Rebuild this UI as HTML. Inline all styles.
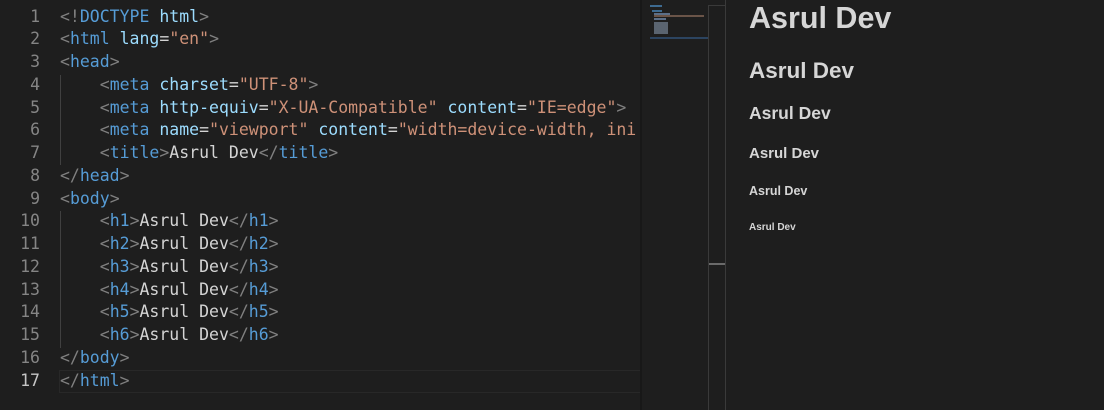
<!DOCTYPE html>
<html style="overflow:hidden;height:410px"><head><style>
body{margin:0;width:1104px;height:410px;background:#1e1e1e;overflow:hidden;position:relative;font-family:"DejaVu Sans Mono",monospace}
.ed{position:absolute;left:0;top:5.5px;width:640px;font-size:16.5px;line-height:22.75px;color:#d4d4d4}
.ed>div{position:relative;height:22.75px}
.ln{position:absolute;left:0;width:40px;text-align:right;color:#858585}
.cd{position:absolute;left:60px;white-space:pre}
.t{color:#569cd6}.p{color:#808080}.a{color:#9cdcfe}.s{color:#ce9178}
.guide{position:absolute;left:60px;width:1px;background:#404040}
.cur{position:absolute;left:59px;width:581px;top:370px;height:21px;border:1px solid #282828}
</style></head><body>
<div class="guide" style="top:75px;height:90px"></div>
<div class="guide" style="top:211px;height:137px"></div>
<div class="cur"></div>
<div class="ed"><div><span class="ln">1</span><span class="cd"><span class="p">&lt;!</span><span class="t">DOCTYPE</span> <span class="a">html</span><span class="p">&gt;</span></span></div><div><span class="ln">2</span><span class="cd"><span class="p">&lt;</span><span class="t">html</span> <span class="a">lang</span>=<span class="s">"en"</span><span class="p">&gt;</span></span></div><div><span class="ln">3</span><span class="cd"><span class="p">&lt;</span><span class="t">head</span><span class="p">&gt;</span></span></div><div><span class="ln">4</span><span class="cd">    <span class="p">&lt;</span><span class="t">meta</span> <span class="a">charset</span>=<span class="s">"UTF-8"</span><span class="p">&gt;</span></span></div><div><span class="ln">5</span><span class="cd">    <span class="p">&lt;</span><span class="t">meta</span> <span class="a">http-equiv</span>=<span class="s">"X-UA-Compatible"</span> <span class="a">content</span>=<span class="s">"IE=edge"</span><span class="p">&gt;</span></span></div><div><span class="ln">6</span><span class="cd">    <span class="p">&lt;</span><span class="t">meta</span> <span class="a">name</span>=<span class="s">"viewport"</span> <span class="a">content</span>=<span class="s">"width=device-width, ini</span></span></div><div><span class="ln">7</span><span class="cd">    <span class="p">&lt;</span><span class="t">title</span><span class="p">&gt;</span>Asrul Dev<span class="p">&lt;/</span><span class="t">title</span><span class="p">&gt;</span></span></div><div><span class="ln">8</span><span class="cd"><span class="p">&lt;/</span><span class="t">head</span><span class="p">&gt;</span></span></div><div><span class="ln">9</span><span class="cd"><span class="p">&lt;</span><span class="t">body</span><span class="p">&gt;</span></span></div><div><span class="ln">10</span><span class="cd">    <span class="p">&lt;</span><span class="t">h1</span><span class="p">&gt;</span>Asrul Dev<span class="p">&lt;/</span><span class="t">h1</span><span class="p">&gt;</span></span></div><div><span class="ln">11</span><span class="cd">    <span class="p">&lt;</span><span class="t">h2</span><span class="p">&gt;</span>Asrul Dev<span class="p">&lt;/</span><span class="t">h2</span><span class="p">&gt;</span></span></div><div><span class="ln">12</span><span class="cd">    <span class="p">&lt;</span><span class="t">h3</span><span class="p">&gt;</span>Asrul Dev<span class="p">&lt;/</span><span class="t">h3</span><span class="p">&gt;</span></span></div><div><span class="ln">13</span><span class="cd">    <span class="p">&lt;</span><span class="t">h4</span><span class="p">&gt;</span>Asrul Dev<span class="p">&lt;/</span><span class="t">h4</span><span class="p">&gt;</span></span></div><div><span class="ln">14</span><span class="cd">    <span class="p">&lt;</span><span class="t">h5</span><span class="p">&gt;</span>Asrul Dev<span class="p">&lt;/</span><span class="t">h5</span><span class="p">&gt;</span></span></div><div><span class="ln">15</span><span class="cd">    <span class="p">&lt;</span><span class="t">h6</span><span class="p">&gt;</span>Asrul Dev<span class="p">&lt;/</span><span class="t">h6</span><span class="p">&gt;</span></span></div><div><span class="ln">16</span><span class="cd"><span class="p">&lt;/</span><span class="t">body</span><span class="p">&gt;</span></span></div><div><span class="ln" style="color:#c6c6c6">17</span><span class="cd"><span class="p">&lt;/</span><span class="t">html</span><span class="p">&gt;</span></span></div></div>
<div style="position:absolute;left:640px;top:0;width:2px;height:410px;background:#181818"></div>
<div style="position:absolute;left:642px;top:0;width:66px;height:410px;background:#1e1e1e"></div>
<div style="position:absolute;left:650px;top:5px;width:12px;height:2px;background:#3d6a90"></div>
<div style="position:absolute;left:652px;top:10px;width:10px;height:2px;background:#3d6a90"></div>
<div style="position:absolute;left:654px;top:13px;width:16px;height:2px;background:#5c6f88"></div>
<div style="position:absolute;left:654px;top:15px;width:50px;height:2px;background:#6a5448"></div>
<div style="position:absolute;left:654px;top:18px;width:12px;height:2px;background:#5c6f88"></div>
<div style="position:absolute;left:654px;top:22px;width:14px;height:12px;background:#5a6470"></div>
<div style="position:absolute;left:650px;top:37px;width:58px;height:2px;background:#2c4460"></div>
<div style="position:absolute;left:708px;top:5px;width:1px;height:405px;background:#3a3a3a"></div>
<div style="position:absolute;left:725px;top:0;width:1px;height:410px;background:#3a3a3a"></div>
<div style="position:absolute;left:709px;top:5px;width:16px;height:1px;background:#3a3a3a"></div>
<div style="position:absolute;left:709px;top:263px;width:16px;height:2px;background:#6a6a6a"></div>
<div style="position:absolute;left:749px;top:0;font-family:'Liberation Sans',sans-serif;font-weight:bold;color:#d6d6d6">
<div style="position:absolute;top:1px;font-size:30.5px;white-space:nowrap">Asrul Dev</div>
<div style="position:absolute;top:58px;font-size:22.5px;white-space:nowrap">Asrul Dev</div>
<div style="position:absolute;top:103px;font-size:17.5px;white-space:nowrap">Asrul Dev</div>
<div style="position:absolute;top:145px;font-size:15px;white-space:nowrap">Asrul Dev</div>
<div style="position:absolute;top:184px;font-size:12.5px;white-space:nowrap">Asrul Dev</div>
<div style="position:absolute;top:222px;font-size:10px;white-space:nowrap">Asrul Dev</div>
</div>
</body></html>
